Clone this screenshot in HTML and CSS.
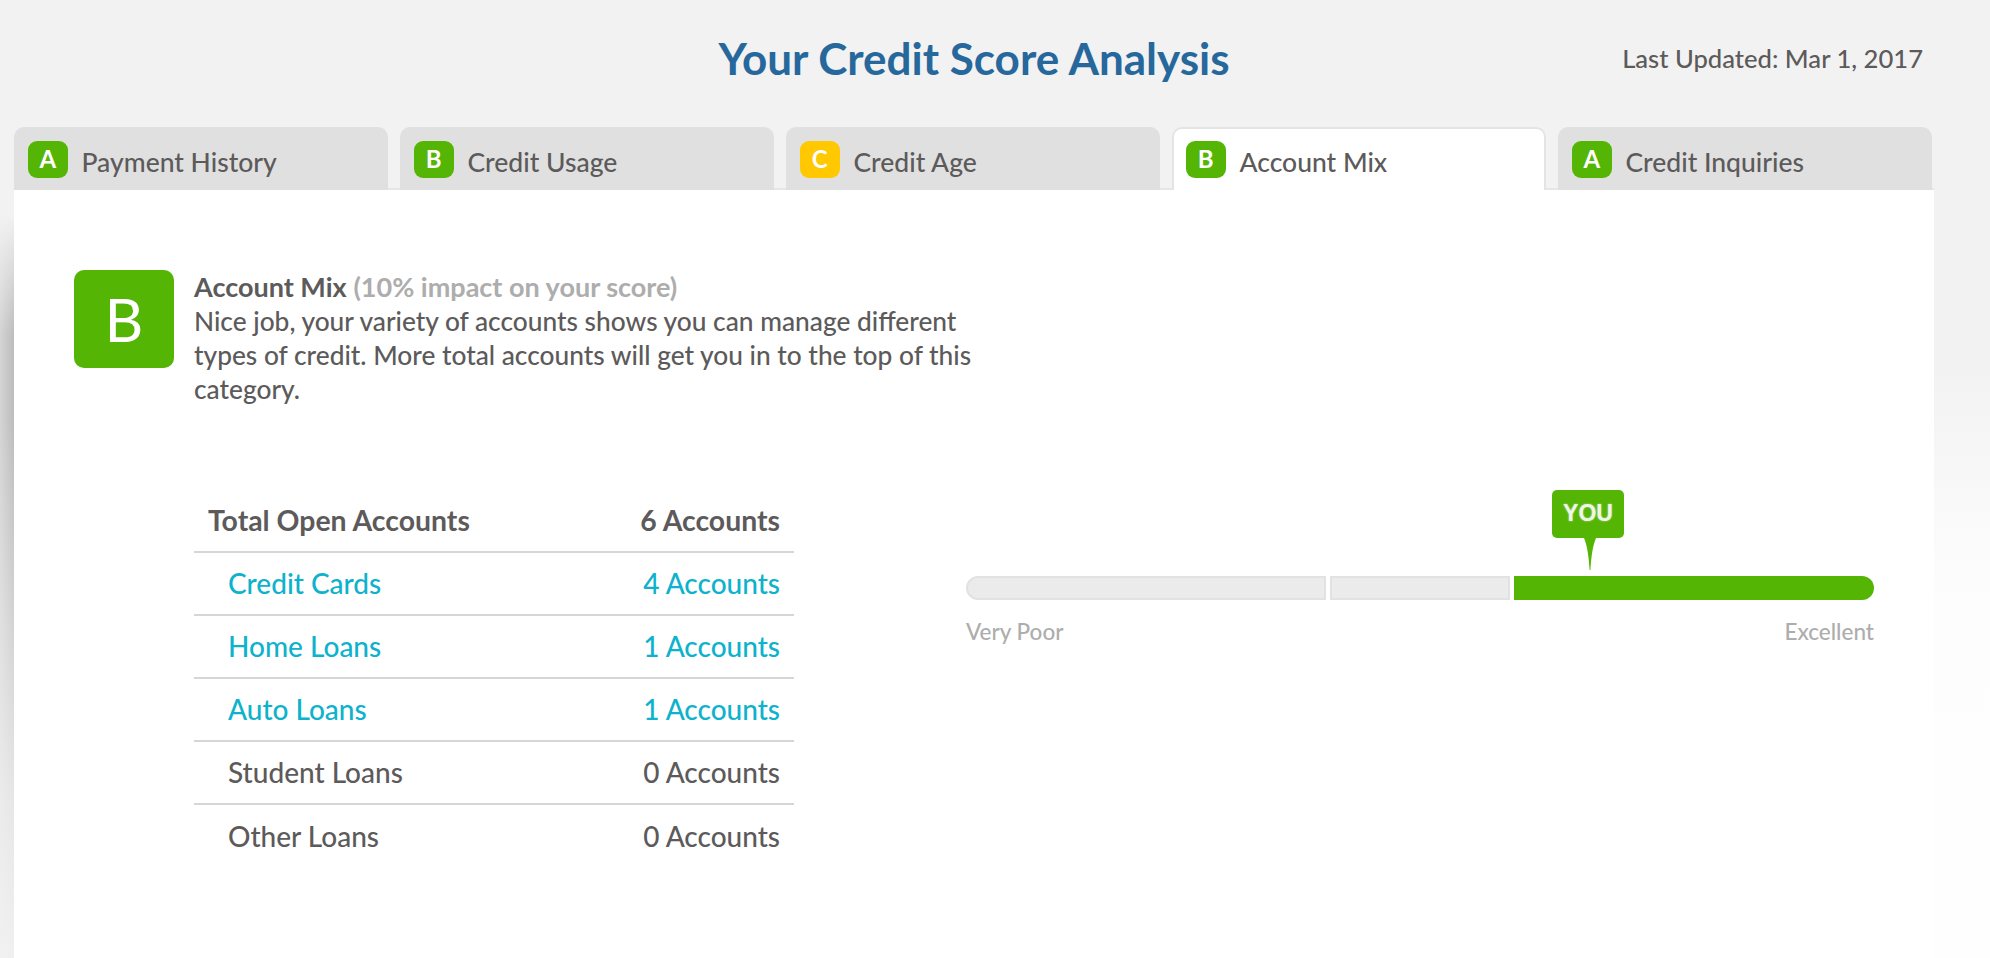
FILE: index.html
```html
<!DOCTYPE html>
<html lang="en">
<head>
<meta charset="utf-8">
<title>Your Credit Score Analysis</title>
<link rel="stylesheet" href="styles.css">
</head>
<body>
<header class="page-head">
  <span></span>
  <h1 class="title">Your Credit Score Analysis</h1>
  <p class="updated">Last Updated: Mar 1, 2017</p>
</header>
<nav class="tabs">
  <div class="tab"><span class="chip chip-green">A</span><span class="tab-label">Payment History</span></div>
  <div class="tab"><span class="chip chip-green">B</span><span class="tab-label">Credit Usage</span></div>
  <div class="tab"><span class="chip chip-yellow">C</span><span class="tab-label">Credit Age</span></div>
  <div class="tab tab-active"><span class="chip chip-green">B</span><span class="tab-label">Account Mix</span></div>
  <div class="tab"><span class="chip chip-green">A</span><span class="tab-label">Credit Inquiries</span></div>
</nav>
<main class="panel">
  <section class="intro">
    <div class="grade">B</div>
    <div class="intro-text">
      <p class="intro-head"><strong>Account Mix</strong> <span class="impact">(10% impact on your score)</span></p>
      <p class="intro-body">Nice job, your variety of accounts shows you can manage different types of credit. More total accounts will get you in to the top of this category.</p>
    </div>
  </section>
  <section class="details">
    <div class="accounts">
      <div class="row row-total"><span>Total Open Accounts</span><span>6 Accounts</span></div>
      <div class="row row-link"><span>Credit Cards</span><span>4 Accounts</span></div>
      <div class="row row-link"><span>Home Loans</span><span>1 Accounts</span></div>
      <div class="row row-link"><span>Auto Loans</span><span>1 Accounts</span></div>
      <div class="row"><span>Student Loans</span><span>0 Accounts</span></div>
      <div class="row"><span>Other Loans</span><span>0 Accounts</span></div>
    </div>
    <div class="meter">
      <div class="marker">
        <div class="marker-box">YOU</div>
        <svg class="marker-stem" width="12" height="32" viewBox="0 0 12 32"><path d="M0 0H12C8.5 8 7.2 20 6.4 32H5.6C4.8 20 3.5 8 0 0Z" fill="#55b505"/></svg>
      </div>
      <div class="bar">
        <div class="seg seg-first"></div>
        <div class="seg seg-mid"></div>
        <div class="seg seg-last"></div>
      </div>
      <div class="scale"><span>Very Poor</span><span>Excellent</span></div>
    </div>
  </section>
</main>
</body>
</html>
```

FILE: styles.css
```css
* { box-sizing: border-box; }
html, body { margin: 0; padding: 0; height: 100%; }
body {
  width: 1990px;
  height: 958px;
  overflow: hidden;
  font-family: Lato, "Noto Sans", sans-serif;
  font-size: 26.3px;
  font-weight: 500;
  color: #5c5a5a;
  background:
    linear-gradient(to right, rgba(242,242,242,.45), rgba(242,242,242,0)) 0 0 / 14px 100% no-repeat,
    linear-gradient(to bottom, #f2f2f2 0, #f2f2f2 215px, #bcbcbc 335px, #bcbcbc 420px, #d2d2d2 620px, #e6e6e6 800px, #f0f0f0 958px) 0 0 / 14px 100% no-repeat,
    linear-gradient(to bottom, #f2f2f2 0, #f2f2f2 360px, #f5f5f5 430px, #fafafa 520px, #fdfdfd 600px, #fefefe 958px);
}
.page-head {
  height: 127px;
  padding: 36px 67px 0 25px;
  display: grid;
  grid-template-columns: 1fr auto 1fr;
  align-items: start;
}
.title {
  margin: 0;
  font-size: 44px;
  line-height: 44px;
  font-weight: 700;
  color: #27689c;
}
.updated {
  margin: 6px 0 0;
  justify-self: end;
  font-size: 25.6px;
  line-height: 32px;
}
.tabs {
  width: 1920px;
  height: 63px;
  margin-left: 14px;
  display: flex;
  gap: 12px;
  border-bottom: 2px solid #e6e6e6;
}
.tab {
  width: 374px;
  height: 63px;
  padding: 14px 0 0 14px;
  display: flex;
  gap: 14px;
  background: #e0e0e0;
  border-radius: 10px 10px 0 0;
  flex: none;
}
.tab-active {
  background: #fff;
  border: 2px solid #e4e4e4;
  border-bottom: 0;
  padding: 12px 0 0 12px;
}
.chip {
  width: 39.5px;
  height: 37px;
  border-radius: 9px;
  color: #fff;
  font-size: 24px;
  font-weight: 700;
  line-height: 36px;
  text-align: center;
  flex: none;
}
.chip-green { background: #55b505; }
.chip-yellow { background: #ffc800; }
.tab-label { font-size: 26.5px; line-height: 42px; }
.panel {
  width: 1920px;
  height: 768px;
  margin-left: 14px;
  padding: 80px 60px 0;
  background: #fff;
}
.intro {
  display: flex;
  gap: 20px;
  align-items: flex-start;
}
.grade {
  width: 100px;
  height: 98px;
  border-radius: 10px;
  background: #55b505;
  color: #fff;
  font-size: 60px;
  font-weight: 400;
  line-height: 98px;
  text-align: center;
  flex: none;
}
.intro-text { width: 785px; line-height: 34px; }
.intro-text p { margin: 0; }
.intro-head { font-size: 27px; }
.intro-head strong { font-weight: 700; }
.impact { color: #adadad; font-weight: 700; }
.details {
  margin: 84px 0 0 120px;
  display: flex;
  gap: 172px;
  align-items: flex-start;
}
.accounts { width: 600px; flex: none; font-size: 28px; }
.row {
  height: 63px;
  padding: 0 14px 1px 34px;
  display: flex;
  justify-content: space-between;
  align-items: center;
  border-bottom: 2px solid #d6d6d6;
}
.row:last-child { border-bottom: 0; }
.row-total { padding-left: 14px; font-size: 28.4px; font-weight: 700; }
.row-link { color: #0db2cc; }
.meter {
  width: 908px;
  position: relative;
  padding-top: 86px;
  flex: none;
}
.marker {
  position: absolute;
  left: 586px;
  top: 0;
  width: 72px;
  display: flex;
  flex-direction: column;
  align-items: center;
}
.marker-box {
  width: 72px;
  height: 48px;
  border-radius: 5px;
  background: #55b505;
  color: #f0f5ea;
  font-family: "Liberation Sans", Arial, sans-serif;
  font-size: 23px;
  font-weight: 700;
  line-height: 46px;
  text-align: center;
  text-shadow: 0 0 2px rgba(255,255,255,.6);
}
.marker-stem { display: block; margin-left: 4px; }
.bar { display: flex; gap: 4px; height: 24px; }
.seg { background: #ebebeb; border: 2px solid #e2e2e2; }
.seg-first { width: 360px; border-radius: 12px 0 0 12px; }
.seg-mid { width: 180px; }
.seg-last { width: 360px; background: #55b505; border: 0; border-radius: 0 12px 12px 0; }
.scale {
  margin-top: 18px;
  display: flex;
  justify-content: space-between;
  font-size: 22.5px;
  line-height: 28px;
  color: #adadad;
}
```
